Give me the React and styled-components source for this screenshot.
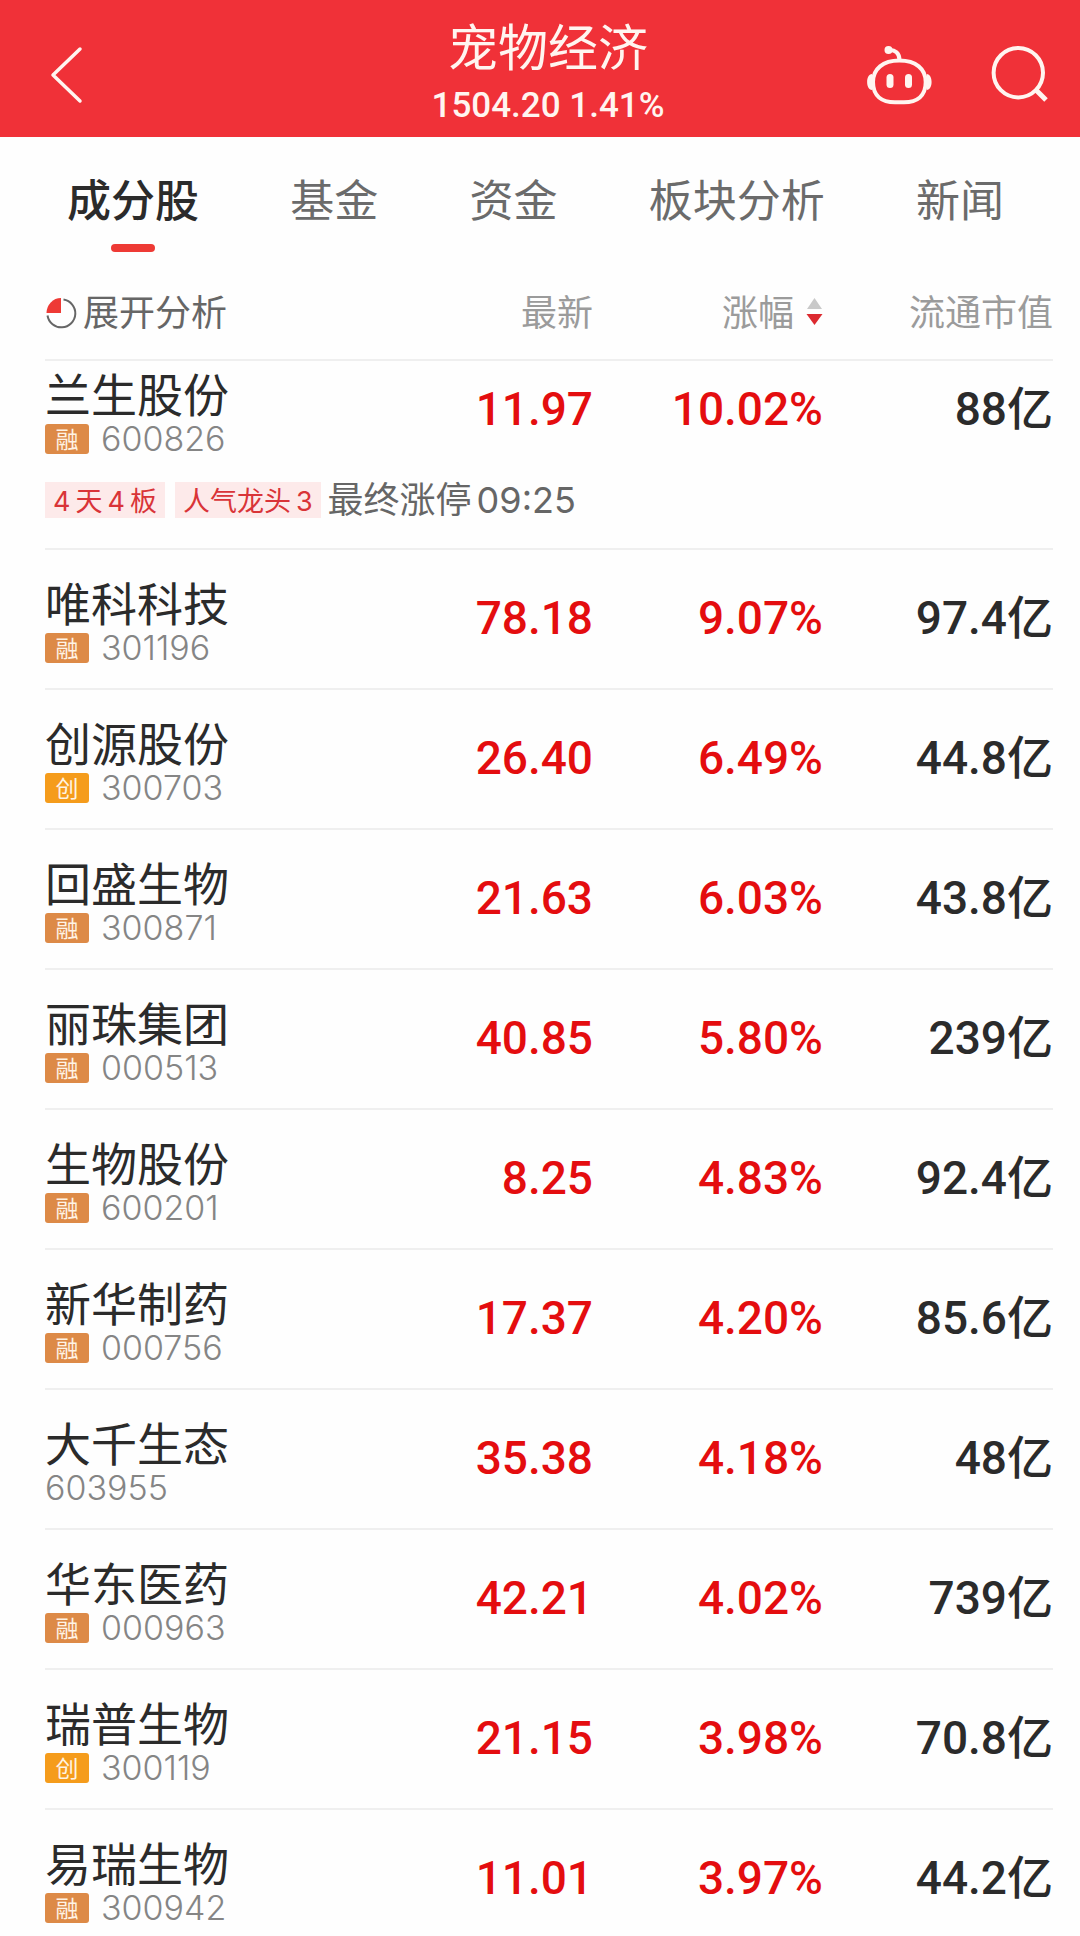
import React, { useState } from "react";
import styled, { createGlobalStyle } from "styled-components";

const GlobalStyle = createGlobalStyle`
  * {
    box-sizing: border-box;
  }

  body {
    margin: 0;
    background: #fefefe;
    font-family: Inter, "Noto Sans CJK SC", sans-serif;
    color: #2b2b2b;
  }

  button {
    border: none;
    padding: 0;
    background: transparent;
    font: inherit;
    color: inherit;
    cursor: pointer;
  }
`;

const Screen = styled.div`
  height: 100vh;
  display: flex;
  flex-direction: column;
  overflow: hidden;
`;

const Header = styled.header`
  flex: none;
  display: grid;
  grid-template-columns: 1fr auto 1fr;
  align-items: center;
  height: 137px;
  padding: 12px 32px 0 48px;
  background: #f03138;
  color: #fff5f0;
`;

const Heading = styled.div`
  text-align: center;

  h1 {
    margin: 0;
    font-family: "Noto Sans CJK SC", sans-serif;
    font-size: 50px;
    font-weight: 400;
    line-height: 62px;
  }

  p {
    margin: 0;
    font-family: Roboto, sans-serif;
    font-size: 35px;
    font-weight: 500;
    line-height: 62px;
  }
`;

const IconButton = styled.button`
  display: flex;
`;

const Actions = styled.div`
  display: flex;
  justify-content: flex-end;
  gap: 56px;
`;

const Tabs = styled.nav`
  flex: none;
  display: flex;
  justify-content: space-between;
  padding: 29px 76px 0 67px;
`;

const Tab = styled.button`
  display: flex;
  flex-direction: column;
  align-items: center;
  font-family: "Noto Sans CJK SC", sans-serif;
  font-size: 44px;
  font-weight: ${({ $active }) => ($active ? 500 : 400)};
  line-height: 64px;
  color: ${({ $active }) => ($active ? "#2b2b2b" : "#6b6b6b")};

  &::after {
    content: "";
    width: 44px;
    height: 8px;
    margin-top: 14px;
    border-radius: 4px;
    background: ${({ $active }) => ($active ? "#ee3a35" : "transparent")};
  }
`;

const List = styled.main`
  flex: 1;
  min-height: 0;
  overflow-y: auto;
  scrollbar-width: none;
  padding: 0 27px 0 45px;
`;

const Table = styled.table`
  width: 100%;
  table-layout: fixed;
  border-collapse: separate;
  border-spacing: 0;
`;

const HeadCell = styled.th`
  position: sticky;
  top: 0;
  width: ${({ $width }) => $width};
  height: 109px;
  padding: 14px 0 0;
  border-bottom: 2px solid #efefef;
  background: #fefefe;
  font-size: 36px;
  font-weight: 400;
  line-height: 48px;
  text-align: right;
  white-space: nowrap;
  color: #9b9b9b;
`;

const Expand = styled.button`
  display: flex;
  align-items: center;
  gap: 5px;
  color: #666;
`;

const Sort = styled.button`
  display: inline-flex;
  align-items: center;
  gap: 12px;
`;

const NameCell = styled.td`
  padding: ${({ $first }) => ($first ? "5px" : "25px")} 0 ${({ $open }) => ($open ? "0" : "25px")};
  border-bottom: ${({ $open }) => ($open ? "none" : "2px solid #efefef")};
`;

const Name = styled.div`
  font-family: "Noto Sans CJK SC", sans-serif;
  font-size: 46px;
  line-height: 52px;
  white-space: nowrap;
`;

const CodeLine = styled.div`
  display: flex;
  align-items: center;
  gap: 12px;
  height: 30px;
  margin-top: 6px;
  font-size: 34px;
  font-weight: 300;
  line-height: 30px;
  color: #858585;
`;

const Badge = styled.span`
  width: 44px;
  height: 30px;
  border-radius: 3px;
  background: ${({ $kind }) => ($kind === "创" ? "#f59c1c" : "#dd8a47")};
  font-family: "Noto Sans CJK SC", sans-serif;
  font-size: 23px;
  font-weight: 400;
  line-height: 28px;
  text-align: center;
  color: #fff3e4;
`;

const NumberCell = styled.td`
  padding: ${({ $first }) => ($first ? "2px 0 0" : "0 0 2px")};
  border-bottom: ${({ $open }) => ($open ? "none" : "2px solid #efefef")};
  font-family: Roboto, "Noto Sans CJK SC", sans-serif;
  font-size: 46px;
  font-weight: 500;
  line-height: 56px;
  text-align: right;
  white-space: nowrap;
  color: ${({ $red }) => ($red ? "#e40d0f" : "#2b2b2b")};
`;

const NoteCell = styled.td`
  padding: 28px 0 30px;
  border-bottom: 2px solid #efefef;
`;

const Note = styled.div`
  display: flex;
  align-items: center;
  font-size: 36px;
  line-height: 36px;
  color: #666;
`;

const Tag = styled.span`
  margin-right: ${({ $last }) => ($last ? "7px" : "10px")};
  padding: 3px 8px 0;
  background: #fdeaea;
  font-size: 27px;
  line-height: 33px;
  color: #d93438;
`;

const Mixed = styled.span`
  display: flex;
  gap: 5px;
`;

const tabs = ["成分股", "基金", "资金", "板块分析", "新闻"];

const stocks = [
  {
    name: "兰生股份",
    badge: "融",
    code: "600826",
    price: "11.97",
    change: "10.02%",
    cap: "88亿",
    tags: ["4天4板", "人气龙头3"],
    note: "最终涨停09:25",
  },
  { name: "唯科科技", badge: "融", code: "301196", price: "78.18", change: "9.07%", cap: "97.4亿" },
  { name: "创源股份", badge: "创", code: "300703", price: "26.40", change: "6.49%", cap: "44.8亿" },
  { name: "回盛生物", badge: "融", code: "300871", price: "21.63", change: "6.03%", cap: "43.8亿" },
  { name: "丽珠集团", badge: "融", code: "000513", price: "40.85", change: "5.80%", cap: "239亿" },
  { name: "生物股份", badge: "融", code: "600201", price: "8.25", change: "4.83%", cap: "92.4亿" },
  { name: "新华制药", badge: "融", code: "000756", price: "17.37", change: "4.20%", cap: "85.6亿" },
  { name: "大千生态", code: "603955", price: "35.38", change: "4.18%", cap: "48亿" },
  { name: "华东医药", badge: "融", code: "000963", price: "42.21", change: "4.02%", cap: "739亿" },
  { name: "瑞普生物", badge: "创", code: "300119", price: "21.15", change: "3.98%", cap: "70.8亿" },
  { name: "易瑞生物", badge: "融", code: "300942", price: "11.01", change: "3.97%", cap: "44.2亿" },
];

const BackIcon = () => (
  <svg width="36" height="60" viewBox="0 0 36 60" fill="none" stroke="currentColor" strokeWidth="3.5">
    <path d="M32 4 L5 30 L32 56" strokeLinecap="round" strokeLinejoin="round" />
  </svg>
);

const RobotIcon = () => (
  <svg width="68" height="62" viewBox="0 0 68 62" fill="none" stroke="currentColor" strokeWidth="4">
    <circle cx="22.5" cy="6" r="4" fill="currentColor" stroke="none" />
    <path d="M23 6 C29 5.5 33.5 9 33.5 16" />
    <path d="M33.3 16.5 C50 16.5 59.7 25 59.7 38 C59.7 52 51 58.3 38 58.3 H29 C16 58.3 7 52 7 38 C7 25 17 16.5 33.3 16.5 Z" />
    <path d="M6 30 C-0.5 30 -0.5 46 6 46 Z M60.7 30 C67.2 30 67.2 46 60.7 46 Z" fill="currentColor" stroke="none" />
    <rect x="20.5" y="30" width="7" height="14" rx="3.5" fill="currentColor" stroke="none" />
    <rect x="39" y="30" width="7" height="14" rx="3.5" fill="currentColor" stroke="none" />
  </svg>
);

const SearchIcon = () => (
  <svg width="58" height="58" viewBox="0 0 58 58" fill="none" stroke="currentColor" strokeWidth="4">
    <circle cx="28.3" cy="28.7" r="24.7" />
    <path d="M46 46 L56 56" strokeWidth="5" />
  </svg>
);

const PieIcon = () => (
  <svg width="33" height="32" viewBox="0 0 33 32" fill="none">
    <path d="M16 1 V16 H1.5 A14.5 15 0 0 1 16 1 Z" fill="#ee3a35" />
    <path d="M18.5 2.5 A14 14 0 1 1 2.5 18.5" stroke="#666" strokeWidth="2" />
  </svg>
);

const SortIcon = () => (
  <svg width="17" height="30" viewBox="0 0 17 30">
    <path d="M8.5 0 L16 11 H1 Z" fill="#c9c9c9" />
    <path d="M0.5 16 H16.5 L8.5 27 Z" fill="#dc2a30" />
  </svg>
);

// keeps a small gap between chinese characters and digits
const MixedText = ({ text }) => (
  <Mixed>
    {text.match(/[\d:]+|[^\d:]+/g).map((part, i) => (
      <span key={i}>{part}</span>
    ))}
  </Mixed>
);

const StockRow = ({ stock, first }) => {
  const open = Boolean(stock.note);

  return (
    <>
      <tr>
        <NameCell $first={first} $open={open}>
          <Name>{stock.name}</Name>
          <CodeLine>
            {stock.badge && <Badge $kind={stock.badge}>{stock.badge}</Badge>}
            {stock.code}
          </CodeLine>
        </NameCell>
        <NumberCell $red $first={first} $open={open}>{stock.price}</NumberCell>
        <NumberCell $red $first={first} $open={open}>{stock.change}</NumberCell>
        <NumberCell $first={first} $open={open}>{stock.cap}</NumberCell>
      </tr>
      {open && (
        <tr>
          <NoteCell colSpan={4}>
            <Note>
              {stock.tags.map((tag, i) => (
                <Tag key={tag} $last={i === stock.tags.length - 1}>
                  <MixedText text={tag} />
                </Tag>
              ))}
              <MixedText text={stock.note} />
            </Note>
          </NoteCell>
        </tr>
      )}
    </>
  );
};

const App = () => {
  const [activeTab, setActiveTab] = useState(tabs[0]);

  return (
    <Screen>
      <GlobalStyle />
      <Header>
        <IconButton aria-label="返回">
          <BackIcon />
        </IconButton>
        <Heading>
          <h1>宠物经济</h1>
          <p>1504.20 1.41%</p>
        </Heading>
        <Actions>
          <IconButton aria-label="智能助手">
            <RobotIcon />
          </IconButton>
          <IconButton aria-label="搜索">
            <SearchIcon />
          </IconButton>
        </Actions>
      </Header>
      <Tabs>
        {tabs.map((tab) => (
          <Tab key={tab} $active={tab === activeTab} onClick={() => setActiveTab(tab)}>
            {tab}
          </Tab>
        ))}
      </Tabs>
      <List>
        <Table>
          <thead>
            <tr>
              <HeadCell $width="auto">
                <Expand>
                  <PieIcon />
                  展开分析
                </Expand>
              </HeadCell>
              <HeadCell $width="230px">最新</HeadCell>
              <HeadCell $width="230px">
                <Sort>
                  涨幅
                  <SortIcon />
                </Sort>
              </HeadCell>
              <HeadCell $width="230px">流通市值</HeadCell>
            </tr>
          </thead>
          <tbody>
            {stocks.map((stock, i) => (
              <StockRow key={stock.code} stock={stock} first={i === 0} />
            ))}
          </tbody>
        </Table>
      </List>
    </Screen>
  );
};

export default App;
